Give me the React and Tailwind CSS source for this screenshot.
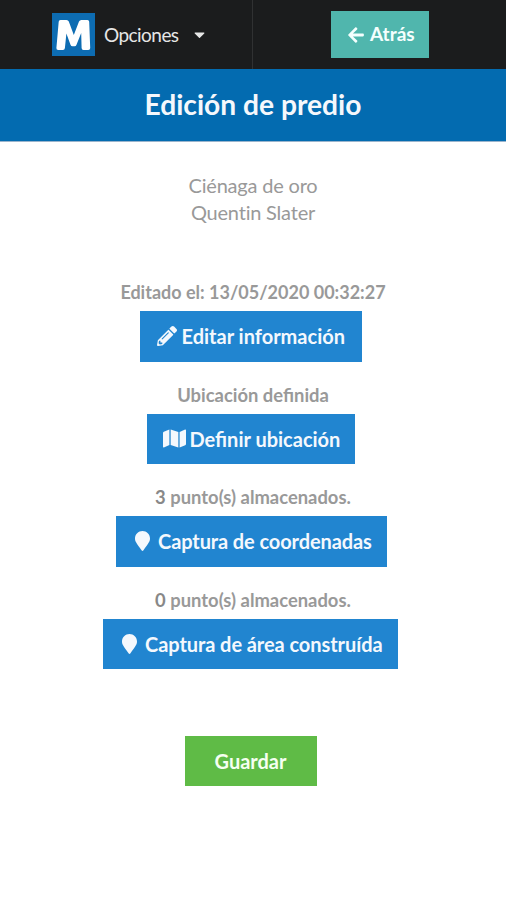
import React from "react";
import {
  FaArrowLeft,
  FaCaretDown,
  FaMap,
  FaMapMarker,
  FaPencilAlt,
} from "react-icons/fa";

const Logo = () => (
  <svg className="h-[43px] w-[43px]" viewBox="0 0 43 43">
    <rect width="43" height="43" fill="#0d6cb2" />
    <path
      d="M8.500 7h6q1.700 0 2.300 1.600l5 13.400 5.200-13.400q.7-1.600 2.400-1.600h6q1.700 0 1.800 1.700l1 26.300q0 2-2 2h-4.700q-1.800 0-1.900-2l-.4-15-4.800 12q-.5 1.300-1.800 1.300h-2.200q-1.300 0-1.800-1.300l-4.200-11.500-1.500 14.500q-.2 2-2 2H6.200q-2 0-1.800-2l2.300-26.300q.1-1.700 1.800-1.700z"
      fill="#fff"
    />
  </svg>
);

const Action = ({ label, labelClass, icon, text, className }) => (
  <div className="mb-[22px] flex flex-col items-center">
    <p
      className={`mb-[7px] h-[23px] whitespace-nowrap font-bold leading-[22px] ${labelClass}`}
    >
      {label}
    </p>
    <button
      className={`flex h-[50.6px] items-center whitespace-nowrap bg-[#2185d0] text-[20px] font-bold leading-5 text-[#f4f8fd] ${className}`}
    >
      {icon}
      {text}
    </button>
  </div>
);

const App = () => {
  return (
    <div className="min-h-[900px] w-full bg-white font-['Lato',sans-serif] text-[#999]">
      <nav className="flex h-[69px] items-center bg-[#1b1c1d]">
        <div className="flex h-full w-[253px] items-center border-r border-[#303132] pl-[52px]">
          <Logo />
          <span className="ml-[9px] w-[75px] pt-px text-[19px] tracking-[-0.55px] text-[#e6e6e6]">
            Opciones
          </span>
          <FaCaretDown className="ml-[12px] h-[17px] w-[17px] text-[#e6e6e6]" />
        </div>
        <button className="ml-[78px] flex h-[47px] w-[98px] items-center bg-[#50b6ad] pl-[16px] text-[19px] font-bold text-[#f4fffe]">
          <FaArrowLeft className="mr-[5px] h-[18px] w-[18px]" />
          Atrás
        </button>
      </nav>

      <header className="flex h-[73px] justify-center border-b border-[#9ab4cc] bg-[#036bb0] pt-[17px]">
        <h1 className="text-[28.2px] font-bold leading-9 text-[#f5f8fc]">
          Edición de predio
        </h1>
      </header>

      <main className="flex flex-col items-center">
        <div className="mt-[30px] text-center text-[20px] leading-[27px] tracking-[-0.2px]">
          <p>Ciénaga de oro</p>
          <p>Quentin Slater</p>
        </div>

        <div className="mt-[55px]">
          <Action
            label="Editado el: 13/05/2020 00:32:27"
            labelClass="text-[18px]"
            icon={<FaPencilAlt className="mr-[5px] h-5 w-5" />}
            text="Editar información"
            className="mr-[5px] w-[222px] pl-[17px] text-[20.2px]"
          />
          <Action
            label="Ubicación definida"
            labelClass="text-[18.4px]"
            icon={<FaMap className="mr-[4px] h-[21px] w-[23px]" />}
            text="Definir ubicación"
            className="mr-[5px] w-[208px] pl-[16px]"
          />
          <Action
            label={
              <>
                <span className="text-[#888]">3</span> punto(s) almacenados.
              </>
            }
            labelClass="text-[18.4px]"
            icon={<FaMapMarker className="mr-[7px] h-5 w-[17px]" />}
            text="Captura de coordenadas"
            className="mr-[3px] w-[271px] pl-[18px] tracking-[-0.1px]"
          />
          <Action
            label={
              <>
                <span className="text-[#888]">0</span> punto(s) almacenados.
              </>
            }
            labelClass="text-[18.4px]"
            icon={<FaMapMarker className="mr-[7px] h-5 w-[17px]" />}
            text="Captura de área construída"
            className="mr-[5px] w-[295px] pl-[18px] tracking-[-0.07px]"
          />
        </div>

        <button className="mr-[5px] mt-[45px] h-[50px] w-[132px] bg-[#5fbb46] text-[20px] font-bold text-[#f5fff1]">
          Guardar
        </button>
      </main>
    </div>
  );
};

export default App;
